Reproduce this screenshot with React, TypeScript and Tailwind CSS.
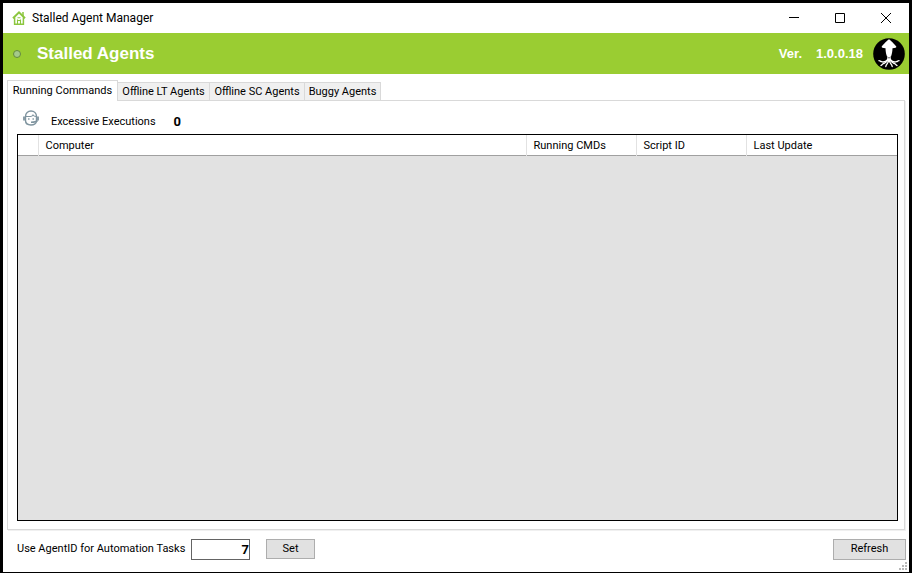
import { useState } from "react";
import clsx from "clsx";

const tabs = ["Running Commands", "Offline LT Agents", "Offline SC Agents", "Buggy Agents"];

const columns = [
  { label: "", width: "w-5" },
  { label: "Computer", width: "" },
  { label: "Running CMDs", width: "w-[110px]" },
  { label: "Script ID", width: "w-[110px]" },
  { label: "Last Update", width: "w-[151px]" },
];

function HouseIcon() {
  return (
    <svg width="14" height="14" viewBox="0 0 14 14" fill="none" stroke="#8cc63f" aria-hidden="true">
      <path d="M1 7.2 7 1.4l6 5.8" strokeWidth="2" />
      <path d="M2.6 6.5v6.7h8.8V6.5M11 1v4" strokeWidth="1.5" />
      <path d="M5.5 13V8.5M8.5 13V8.5M5.5 9.5h3M5.5 6.7h3" strokeWidth="1.1" />
    </svg>
  );
}

function SquidLogo() {
  return (
    <svg width="32" height="32" viewBox="0 0 32 32" aria-label="Squid logo" role="img">
      <circle cx="16" cy="16" r="15.8" fill="#000" />
      <path
        d="M16 1.2c1.500 1 6 5.300 7.300 7.300.3 1-1 1.700-3.800 1.700-.1 3-.5 5.500-1.500 8.300h-4c-1-2.800-1.400-5.300-1.500-8.300-2.800 0-4.100-.7-3.800-1.700C10 6.500 14.500 2.200 16 1.200Z"
        fill="#fff"
      />
      <path d="M14.500 18h3l.5 4-2 2-2-2Z" fill="#fff" />
      <g fill="none" stroke="#fff" strokeWidth="1.3" strokeLinecap="round">
        <path d="M14.800 21.500c-2 2.300-4.500 2.800-6.300 2.200-1.200-.4-1.800-1.200-2.500-1" />
        <path d="M17.200 21.500c2 2.300 4.500 2.800 6.300 2.200 1.200-.4 1.800-1.200 2.500-1" />
        <path d="M15 22c-1 2.500-3.500 2.800-5 3.800-1 .7-1 1.700-2 1.700" />
        <path d="M17 22c1 2.500 3.500 2.800 5 3.800 1 .7 1 1.700 2 1.700" />
        <path d="M15.500 22.500c0 3-2.500 3.500-2.700 6" />
        <path d="M16.500 22.500c0 3 2.500 3.500 2.700 6" />
      </g>
      <circle cx="16" cy="19.800" r=".8" fill="#555" />
    </svg>
  );
}

function AgentIcon() {
  return (
    <svg width="16" height="16" viewBox="0 0 16 16" fill="none" stroke="#7f949f" aria-hidden="true">
      <path d="M2.500 10.500V6.500C2.500 3 5 1 8 1s5.500 2 5.500 5.500v4C13.500 13.500 11 15 8 15s-5.500-1.500-5.500-4.500Z" strokeWidth="1.400" />
      <path d="M3 6.500h4.500c1.200 0 2-.7 2.500-1.500.7 1 1.500 1.500 3 1.500" strokeWidth="1.200" />
      <path d="M1 6.500v4M15 6.500v4" strokeWidth="1.800" />
      <path d="M5.800 8.300v1.400M10.200 8.300v1.400" strokeWidth="1.400" />
      <path d="M14.500 10.500c-1 1.500-3 1.700-6.500 1.700" strokeWidth="1.400" />
    </svg>
  );
}

function ResizeGrip() {
  return (
    <svg width="8" height="8" viewBox="0 0 8 8" fill="#b8b8b8" className="absolute right-0.5 bottom-0.5" aria-hidden="true">
      <path d="M6 0h2v2H6zM6 3h2v2H6zM3 3h2v2H3zM6 6h2v2H6zM3 6h2v2H3zM0 6h2v2H0z" />
    </svg>
  );
}

function TitleBar() {
  return (
    <div className="flex h-[30px] items-center pl-[9px]">
      <HouseIcon />
      <h1 className="ml-1.5 flex-1 text-[12px] leading-4">Stalled Agent Manager</h1>
      <div className="flex h-full">
        <button type="button" aria-label="Minimize" className="flex w-[46px] items-center justify-center">
          <svg width="10" height="10" viewBox="0 0 10 10" stroke="#000">
            <path d="M0 4.5h10" />
          </svg>
        </button>
        <button type="button" aria-label="Maximize" className="flex w-[46px] items-center justify-center">
          <svg width="10" height="10" viewBox="0 0 10 10" fill="none" stroke="#000">
            <path d="M.5.5h9v9h-9z" />
          </svg>
        </button>
        <button type="button" aria-label="Close" className="flex w-[46px] items-center justify-center">
          <svg width="10" height="10" viewBox="0 0 10 10" stroke="#000">
            <path d="M0 0l10 10M10 0 0 10" />
          </svg>
        </button>
      </div>
    </div>
  );
}

function Banner() {
  return (
    <header className="flex h-[41px] items-center bg-[#9acd32] pr-1 pl-2.5 font-['Liberation_Sans',sans-serif] font-bold text-white">
      <span className="size-2 rounded-full border border-[#648a3c] bg-[#a5c98a]" />
      <h2 className="ml-4 flex-1 text-[17px] leading-5">Stalled Agents</h2>
      <span className="text-[13px] leading-4">Ver.</span>
      <span className="mr-2.5 ml-3.5 text-[13px] leading-4">1.0.0.18</span>
      <SquidLogo />
    </header>
  );
}

function CommandTable() {
  return (
    <div className="flex-1 border border-black bg-[#e2e2e2]">
      <table className="w-full table-fixed border-collapse bg-white">
        <thead>
          <tr className="h-5 border-b border-[#a0a0a0]">
            {columns.map((column, index) => (
              <th
                key={index}
                scope="col"
                className={clsx(
                  "border-r border-[#e2e2e2] p-0 pt-0.5 pl-[7px] text-left font-normal last:border-r-0",
                  column.width,
                )}
              >
                {column.label}
              </th>
            ))}
          </tr>
        </thead>
        <tbody />
      </table>
    </div>
  );
}

export default function App() {
  const [active, setActive] = useState(0);
  const [agentId, setAgentId] = useState("7");

  return (
    <div className="flex min-h-screen flex-col border-3 border-b border-black bg-white font-[Roboto,sans-serif] text-[11px] leading-4 text-black">
      <TitleBar />
      <Banner />

      <main className="flex flex-1 flex-col pt-1.5 pr-1 pl-1">
        <div role="tablist" className="flex items-end">
          {tabs.map((tab, index) => (
            <button
              key={tab}
              type="button"
              role="tab"
              aria-selected={active === index}
              onClick={() => setActive(index)}
              className={clsx(
                "border-t border-r border-[#d9d9d9] text-center whitespace-nowrap first:border-l",
                index === 0 && "w-[111px]",
                index === 1 && "w-[92px]",
                index === 2 && "w-[95px]",
                index === 3 && "w-[76px]",
                active === index ? "z-10 -mb-px h-[21px] bg-white" : "h-[18px] bg-[#f0f0f0]",
              )}
            >
              {tab}
            </button>
          ))}
        </div>

        <section
          role="tabpanel"
          className="flex flex-1 flex-col border border-[#d9d9d9] pt-2 pr-1.5 pb-2 pl-[9px] shadow-[1px_1px_0_#f0f0f0]"
        >
          <div className="mb-1 flex h-[21px] items-end pl-1.5">
            <div className="mb-1">
              <AgentIcon />
            </div>
            <span className="ml-3">Excessive Executions</span>
            <span className="ml-[18px] text-[13px] font-bold">0</span>
          </div>
          <CommandTable />
        </section>
      </main>

      <footer className="relative flex h-[42px] items-center pr-[3px] pb-1 pl-3.5">
        <label htmlFor="agent-id" className="w-[174px] whitespace-nowrap">
          Use AgentID for Automation Tasks
        </label>
        <input
          id="agent-id"
          type="text"
          value={agentId}
          onChange={(event) => setAgentId(event.target.value)}
          className="h-[21px] w-[59px] border border-[#646464] bg-white text-right text-[13px] font-bold outline-none"
        />
        <button type="button" className="ml-4 h-5 w-[49px] border border-[#adadad] bg-[#e1e1e1]">
          Set
        </button>
        <button type="button" className="ml-auto h-[21px] w-[73px] border border-[#adadad] bg-[#e1e1e1]">
          Refresh
        </button>
        <ResizeGrip />
      </footer>
    </div>
  );
}
